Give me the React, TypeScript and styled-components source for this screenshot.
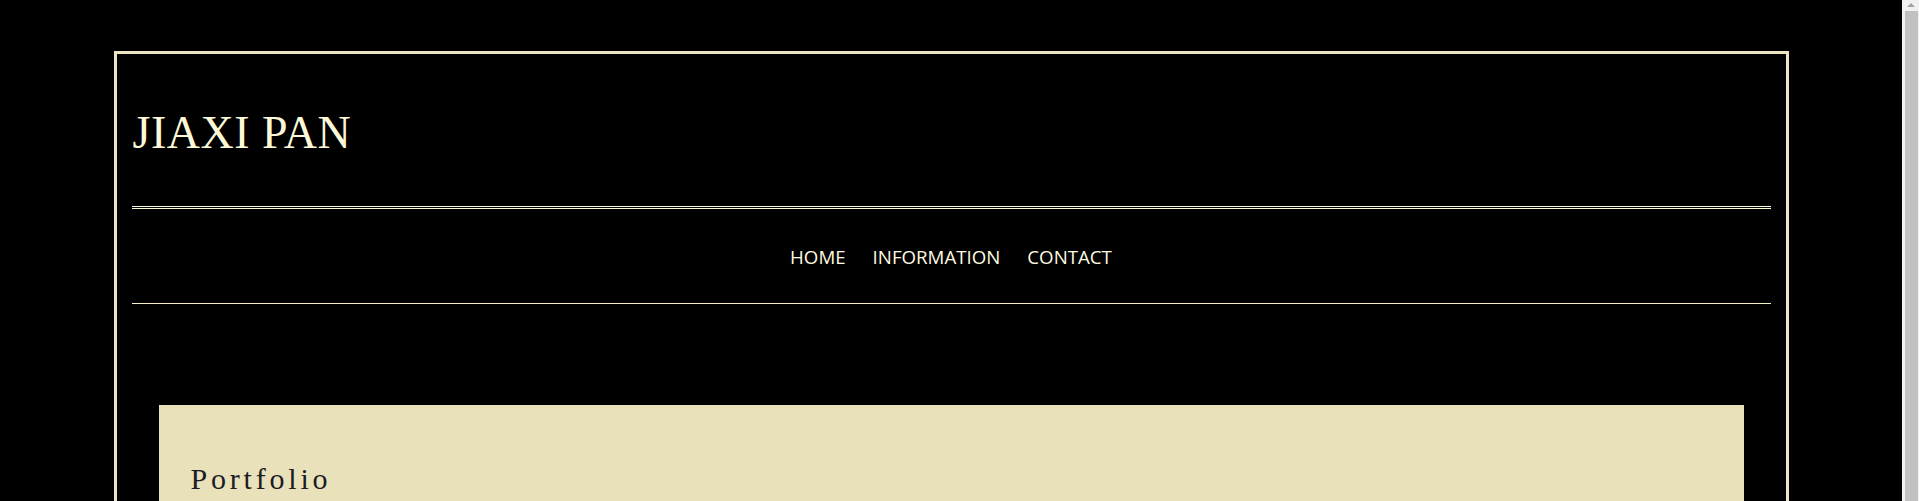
import React from "react";
import styled, { createGlobalStyle } from "styled-components";

const Global = createGlobalStyle`
  html, body {
    margin: 0;
    padding: 0;
    background: #000000;
  }
  body {
    font-family: "Liberation Serif", serif;
  }
`;

const Page = styled.div`
  padding: 51px 17px 0 0;
  min-height: 900px;
`;

const Frame = styled.div`
  width: 1675px;
  margin: 0 auto;
  padding: 0 15px;
  box-sizing: border-box;
  border: 3px solid #ece5c3;
  border-bottom: none;
  min-height: 900px;
`;

const Header = styled.header`
  height: 152px;
  display: flex;
  align-items: center;
`;

const Title = styled.h1`
  margin: 0;
  padding: 5px 0 0 1px;
  font-family: "Liberation Serif", serif;
  font-weight: normal;
  font-size: 46px;
  letter-spacing: 0.5px;
  color: #fdf8d8;
  line-height: 1;
`;

const DoubleRule = styled.div`
  height: 1px;
  border-top: 1px solid #fffbd6;
  border-bottom: 1px solid #fffbd6;
`;

const Rule = styled.div`
  height: 0;
  border-top: 1px solid #f6f0cc;
`;

const Nav = styled.nav`
  height: 94px;
  padding-top: 1px;
  box-sizing: border-box;
  display: flex;
  align-items: center;
  justify-content: center;
  gap: 27px;
`;

const NavLink = styled.a`
  font-family: "Open Sans", sans-serif;
  font-size: 18.7px;
  color: #fffbe0;
  text-decoration: none;
  text-transform: uppercase;
  cursor: pointer;
`;

const Main = styled.main`
  padding: 101px 27px 0;
`;

const Card = styled.section`
  background: #e9e1ba;
  padding: 56px 32px 60px;
  min-height: 400px;
`;

const CardTitle = styled.h2`
  margin: 0;
  font-family: "Liberation Serif", serif;
  font-weight: normal;
  font-size: 30px;
  letter-spacing: 3.8px;
  color: #1c1c24;
  line-height: 1.2;
`;

const ScrollTrack = styled.div`
  position: fixed;
  top: 0;
  right: 0;
  bottom: 0;
  width: 17px;
  background: #f1f1f1;
  display: flex;
  flex-direction: column;
  align-items: center;
`;

const ScrollArrow = styled.div`
  margin-top: 3px;
  width: 0;
  height: 0;
  border-left: 4px solid transparent;
  border-right: 4px solid transparent;
  border-bottom: 4px solid #a3a3a3;
`;

const ScrollThumb = styled.div`
  margin-top: 4px;
  width: 13px;
  flex: 1;
  background: #c1c1c1;
  margin-left: 2px;
`;

export default function App() {
  return (
    <>
      <Global />
      <Page>
        <Frame>
          <Header>
            <Title>JIAXI PAN</Title>
          </Header>
          <DoubleRule />
          <Nav>
            <NavLink>Home</NavLink>
            <NavLink>Information</NavLink>
            <NavLink>Contact</NavLink>
          </Nav>
          <Rule />
          <Main>
            <Card>
              <CardTitle>Portfolio</CardTitle>
            </Card>
          </Main>
        </Frame>
      </Page>
      <ScrollTrack aria-hidden="true">
        <ScrollArrow />
        <ScrollThumb />
      </ScrollTrack>
    </>
  );
}
